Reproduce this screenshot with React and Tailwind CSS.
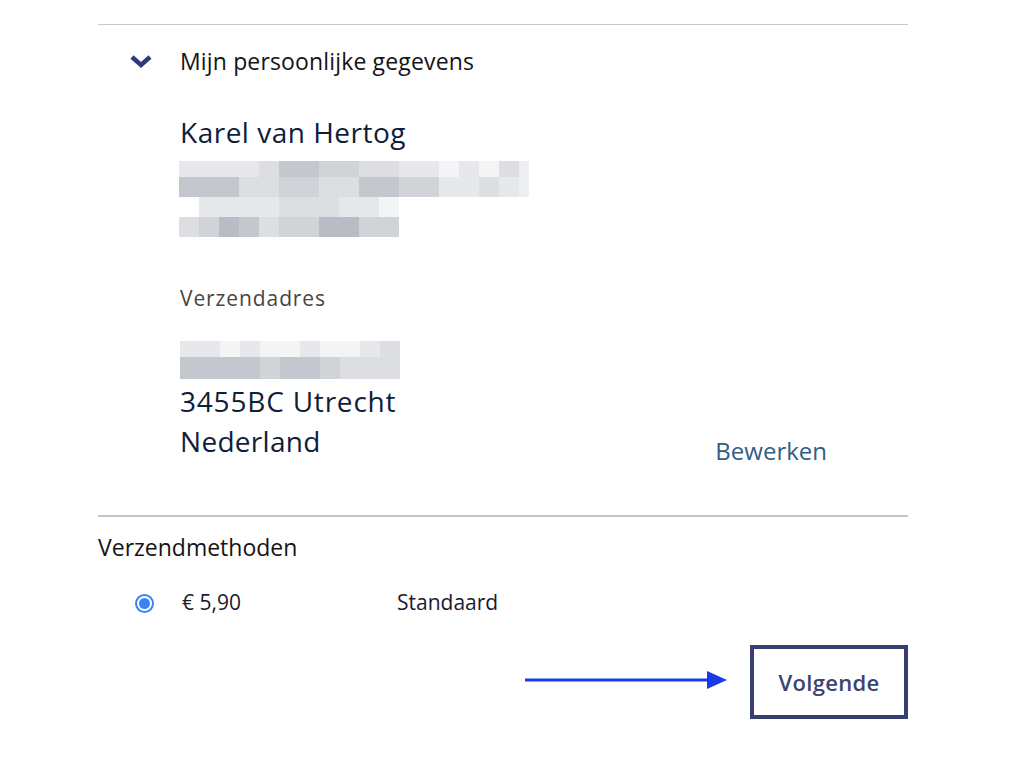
import { Fragment } from 'react';

const shades = ['bg-white', 'bg-[#f3f4f6]', 'bg-[#e7e8eb]', 'bg-[#dcdee2]', 'bg-[#d0d3d8]', 'bg-[#c4c7cd]', 'bg-[#b9bcc4]'];

// each string is one row of 20px cells, digits index into shades
const nameBlur = [
    '22223554433221213',
    '55533443355442232',
    '02222333221',
    '34653446644',
];
const addressBlur = [
    '22121121123',
    '55554554333',
];

const Pixels = ({ rows, heights, tail }) => (
    <div className="flex flex-col">
        {rows.map((row, r) => (
            <div key={r} className={`flex ${heights[r]}`}>
                {row.split('').map((c, i) => (
                    <Fragment key={i}>
                        <div className={`w-[20px] h-full ${shades[Number(c)]}`} />
                    </Fragment>
                ))}
                {tail && r < 2 && <div className="w-[10px] h-full bg-[#eeeff1]" />}
            </div>
        ))}
    </div>
);

export default function App() {
    return (
        <div className="min-h-[778px] bg-white font-['Open_Sans',sans-serif]">
            <div className="w-[810px] ml-[98px] pt-[24px]">
                <div className="border-t border-[#c8c8c8]" />

                {/* Personal data */}
                <div className="flex items-center mt-[21px] h-[30px]">
                    <div className="w-[82px] flex justify-center pl-[4px]">
                        <svg width="24" height="16" viewBox="0 0 24 16">
                            <path d="M3 4 L12 12 L21 4" fill="none" stroke="#2e3a7e" strokeWidth="4.5" strokeLinecap="butt" strokeLinejoin="miter" />
                        </svg>
                    </div>
                    <span className="text-[23px] tracking-[0.15px] text-[#141414]">Mijn persoonlijke gegevens</span>
                </div>

                <div className="flex items-end justify-between pl-[82px] pr-[82px]">
                    <div>
                        <div className="mt-[38px] text-[28px] tracking-[0.5px] leading-[36px] text-[#0f1d3a]">Karel van Hertog</div>
                        <div className="mt-[11px] -ml-[1px]">
                            <Pixels rows={nameBlur} tail heights={['h-[16px]', 'h-[20px]', 'h-[20px]', 'h-[20px]']} />
                        </div>
                        <div className="mt-[47px] text-[21px] tracking-[0.9px] leading-[28px] text-[#4a4540]">Verzendadres</div>
                        <div className="mt-[29px]">
                            <Pixels rows={addressBlur} heights={['h-[16px]', 'h-[22px]']} />
                        </div>
                        <div className="mt-[2px] text-[28px] tracking-[0.8px] leading-[40px] text-[#0f1d3a]">3455BC Utrecht</div>
                        <div className="text-[28px] tracking-[0.3px] leading-[40px] text-[#0f1d3a]">Nederland</div>
                    </div>
                    <a className="text-[24px] leading-[30px] text-[#2f5f86] mb-[-5px] mr-[-1px]">Bewerken</a>
                </div>

                <div className="mt-[54px] border-t-2 border-[#c4c4c4]" />

                {/* Shipping */}
                <div className="mt-[16px] text-[23px] leading-[28px] text-[#141414]">Verzendmethoden</div>
                <div className="mt-[28px] flex items-center h-[28px]">
                    <div className="w-[84px] pl-[37px]">
                        <div className="w-[19px] h-[19px] rounded-full border-2 border-[#3b82f6] flex items-center justify-center">
                            <div className="w-[11px] h-[11px] rounded-full bg-[#3b82f6]" />
                        </div>
                    </div>
                    <span className="w-[215px] text-[21px] text-[#1a1a2e]">€ 5,90</span>
                    <span className="text-[21px] text-[#1a1a2e]">Standaard</span>
                </div>

                <div className="mt-[28px] flex items-center justify-end">
                    <svg width="206" height="22" viewBox="0 0 206 22" className="mr-[21px] mt-[-4px]">
                        <line x1="2" y1="11" x2="186" y2="11" stroke="#1a3be8" strokeWidth="3" />
                        <path d="M184 2 L204 11 L184 20 Z" fill="#1a3be8" />
                    </svg>
                    <button className="w-[158px] h-[74px] border-4 border-[#363f6e] text-[22px] font-semibold tracking-[0.3px] text-[#3a4372]">
                        Volgende
                    </button>
                </div>
            </div>
        </div>
    );
}
